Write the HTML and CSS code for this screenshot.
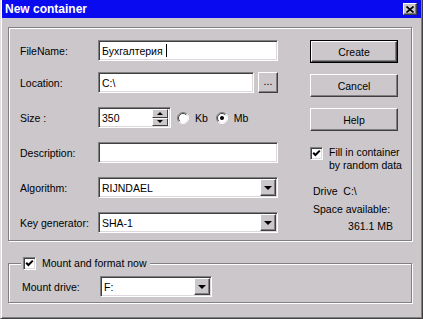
FILE: index.html
```html
<!DOCTYPE html>
<html>
<head>
    <title>New container</title>
    <link rel="stylesheet" href="styles.css">
</head>
<body>
    <div class="window">
        <div class="titlebar">
            <span class="title">New container</span>
            <span class="close">
                <svg width="8" height="7" viewBox="0 0 8 7"><path d="M0.5 0.5 L7.5 6.5 M7.5 0.5 L0.5 6.5" stroke="#000" stroke-width="1.6" fill="none"/></svg>
            </span>
        </div>
        <div class="content">
            <div class="group main">
                <div class="form">
                    <div class="row first">
                        <label>FileName:</label>
                        <div class="field wide">Бухгалтерия<span class="caret"></span></div>
                    </div>
                    <div class="row">
                        <label>Location:</label>
                        <div class="field loc">C:\</div>
                        <div class="btn browse">...</div>
                    </div>
                    <div class="row">
                        <label>Size :</label>
                        <div class="field spin">
                            <span class="val">350</span>
                            <div class="spinbtns">
                                <span class="sb"><i class="up"></i></span>
                                <span class="sb"><i class="down"></i></span>
                            </div>
                        </div>
                        <span class="radio">
                            <svg width="12" height="12" viewBox="0 0 12 12">
                                <circle cx="6" cy="6" r="5" fill="#fff"/>
                                <path d="M2.1 9.9 A5.5 5.5 0 0 1 9.9 2.1" stroke="#808080" fill="none"/>
                                <path d="M2.8 9.2 A4.5 4.5 0 0 1 9.2 2.8" stroke="#404040" fill="none"/>
                                <path d="M9.9 2.1 A5.5 5.5 0 0 1 2.1 9.9" stroke="#fff" fill="none"/>
                            </svg>
                            Kb
                        </span>
                        <span class="radio">
                            <svg width="12" height="12" viewBox="0 0 12 12">
                                <circle cx="6" cy="6" r="5" fill="#fff"/>
                                <path d="M2.1 9.9 A5.5 5.5 0 0 1 9.9 2.1" stroke="#808080" fill="none"/>
                                <path d="M2.8 9.2 A4.5 4.5 0 0 1 9.2 2.8" stroke="#404040" fill="none"/>
                                <path d="M9.9 2.1 A5.5 5.5 0 0 1 2.1 9.9" stroke="#fff" fill="none"/>
                                <circle cx="6" cy="6" r="2" fill="#000"/>
                            </svg>
                            Mb
                        </span>
                    </div>
                    <div class="row">
                        <label>Description:</label>
                        <div class="field wide"></div>
                    </div>
                    <div class="row">
                        <label>Algorithm:</label>
                        <div class="field wide select">RIJNDAEL<span class="drop"><i class="down big"></i></span></div>
                    </div>
                    <div class="row">
                        <label>Key generator:</label>
                        <div class="field wide select">SHA-1<span class="drop"><i class="down big"></i></span></div>
                    </div>
                </div>
                <div class="side">
                    <div class="btn default"><span>Create</span></div>
                    <div class="btn">Cancel</div>
                    <div class="btn">Help</div>
                    <div class="check-row">
                        <span class="check">
                            <svg width="9" height="9" viewBox="0 0 9 9"><polyline points="1.2,3.8 3.4,6 7.8,1.6" stroke="#000" stroke-width="2" fill="none"/></svg>
                        </span>
                        <span class="check-text">Fill in container<br>by random data</span>
                    </div>
                    <div class="info">
                        <div>Drive&nbsp; C:\</div>
                        <div>Space available:</div>
                        <div class="amount">361.1 MB</div>
                    </div>
                </div>
            </div>
            <fieldset class="group mount">
                <legend>
                    <span class="check">
                        <svg width="9" height="9" viewBox="0 0 9 9"><polyline points="1.2,3.8 3.4,6 7.8,1.6" stroke="#000" stroke-width="2" fill="none"/></svg>
                    </span>
                    <span class="legend-text">Mount and format now</span>
                </legend>
                <div class="row">
                    <label>Mount drive:</label>
                    <div class="field drive select">F:<span class="drop"><i class="down big"></i></span></div>
                </div>
            </fieldset>
        </div>
    </div>
</body>
</html>
```

FILE: styles.css
```css
body {
    margin: 0;
    background: #cbc7cb;
    font-family: "Liberation Sans", Arial, sans-serif;
    font-size: 10.5px;
    color: #000;
}

.window {
    width: 423px;
    height: 319px;
    box-sizing: border-box;
    border-left: 1px solid #e2dee2;
    border-right: 1px solid #404040;
    border-bottom: 1px solid #404040;
    box-shadow: inset 1px 0 #fff, inset -1px -1px #808080;
}

.titlebar {
    height: 18px;
    margin: 0 1px;
    padding: 0 4px 0 3px;
    background: #0a0af0;
    display: flex;
    align-items: center;
    justify-content: space-between;
}

.title {
    color: #fff;
    font-weight: bold;
    font-size: 12px;
}

.close {
    width: 14px;
    height: 12px;
    box-sizing: border-box;
    background: #cbc7cb;
    border-top: 1px solid #fff;
    border-left: 1px solid #fff;
    border-right: 1px solid #404040;
    border-bottom: 1px solid #404040;
    box-shadow: inset -1px -1px #808080;
    display: flex;
    align-items: center;
    justify-content: center;
}

.content {
    padding: 9px 10px 0 7px;
}

.group {
    border: 1px solid #808080;
    box-shadow: inset 1px 1px #fff, 1px 1px #fff;
}

.main {
    height: 214px;
    box-sizing: border-box;
    padding: 12px 0 0 11px;
    display: flex;
}

.form {
    width: 258px;
    display: flex;
    flex-direction: column;
    gap: 14px;
}

.row {
    display: flex;
    align-items: center;
    height: 21px;
}

.row.first {
    margin-bottom: -3px;
}

label {
    width: 78px;
    flex: none;
}

.field {
    height: 21px;
    box-sizing: border-box;
    background: #fff;
    border-top: 1px solid #808080;
    border-left: 1px solid #808080;
    border-right: 1px solid #fff;
    border-bottom: 1px solid #fff;
    box-shadow: inset 1px 1px #404040, inset -1px -1px #dcd8dc;
    padding: 0 2px 0 3px;
    display: flex;
    align-items: center;
    position: relative;
}

.wide {
    width: 180px;
}

.loc {
    width: 156px;
}

.caret {
    display: inline-block;
    width: 1px;
    height: 13px;
    background: #000;
    margin-left: 3px;
}

.btn {
    box-sizing: border-box;
    background: #cbc7cb;
    border-top: 1px solid #fff;
    border-left: 1px solid #fff;
    border-right: 1px solid #404040;
    border-bottom: 1px solid #404040;
    box-shadow: inset -1px -1px #808080;
    display: flex;
    align-items: center;
    justify-content: center;
}

.browse {
    width: 20px;
    height: 21px;
    margin-left: 4px;
    padding-bottom: 3px;
}

.spin {
    width: 73px;
    padding-right: 2px;
    justify-content: space-between;
}

.spinbtns {
    display: flex;
    flex-direction: column;
    height: 17px;
}

.sb {
    width: 16px;
    height: 8.5px;
    box-sizing: border-box;
    background: #cbc7cb;
    border-top: 1px solid #fff;
    border-left: 1px solid #fff;
    border-right: 1px solid #404040;
    border-bottom: 1px solid #404040;
    display: flex;
    align-items: center;
    justify-content: center;
}

.up {
    width: 0;
    height: 0;
    border-left: 3px solid transparent;
    border-right: 3px solid transparent;
    border-bottom: 3px solid #000;
}

.down {
    width: 0;
    height: 0;
    border-left: 3px solid transparent;
    border-right: 3px solid transparent;
    border-top: 3px solid #000;
}

.down.big {
    border-left-width: 4px;
    border-right-width: 4px;
    border-top-width: 4px;
}

.radio {
    display: flex;
    align-items: center;
    gap: 6px;
    margin-left: 6px;
    margin-right: 2px;
}

.select {
    justify-content: space-between;
}

.drop {
    width: 16px;
    height: 17px;
    box-sizing: border-box;
    background: #cbc7cb;
    border-top: 1px solid #fff;
    border-left: 1px solid #fff;
    border-right: 1px solid #404040;
    border-bottom: 1px solid #404040;
    box-shadow: inset -1px -1px #808080;
    display: flex;
    align-items: center;
    justify-content: center;
    margin-right: -1px;
}

.side {
    width: 95px;
    margin-left: 32px;
    display: flex;
    flex-direction: column;
    gap: 11px;
}

.side .btn {
    width: 88px;
    height: 23px;
}

.side .btn.default {
    border: 1px solid #000;
    box-shadow: none;
    padding: 0;
}

.default span {
    flex: 1;
    align-self: stretch;
    display: flex;
    align-items: center;
    justify-content: center;
    border-top: 1px solid #fff;
    border-left: 1px solid #fff;
    border-right: 1px solid #404040;
    border-bottom: 1px solid #404040;
    box-shadow: inset -1px -1px #808080;
}

.check-row {
    display: flex;
    align-items: flex-start;
    margin-top: 5px;
    white-space: nowrap;
}

.check {
    width: 13px;
    height: 13px;
    box-sizing: border-box;
    flex: none;
    background: #fff;
    border-top: 1px solid #808080;
    border-left: 1px solid #808080;
    border-right: 1px solid #fff;
    border-bottom: 1px solid #fff;
    box-shadow: inset 1px 1px #404040, inset -1px -1px #dcd8dc;
    display: flex;
    align-items: center;
    justify-content: center;
}

.check-text {
    margin-left: 6px;
    margin-top: -1px;
    line-height: 13px;
}

.info {
    width: 80px;
    padding-left: 3px;
    line-height: 17.5px;
    white-space: nowrap;
}

.amount {
    text-align: right;
}

.mount {
    margin: 16px 0 0;
    padding: 6px 0 5px 13px;
    min-width: 0;
}

.mount legend {
    display: flex;
    align-items: center;
    line-height: 13px;
    padding: 0 4px 0 2px;
    margin-left: -1px;
    background: #cbc7cb;
}

.legend-text {
    margin-left: 6px;
}

.drive {
    width: 112px;
}
```
